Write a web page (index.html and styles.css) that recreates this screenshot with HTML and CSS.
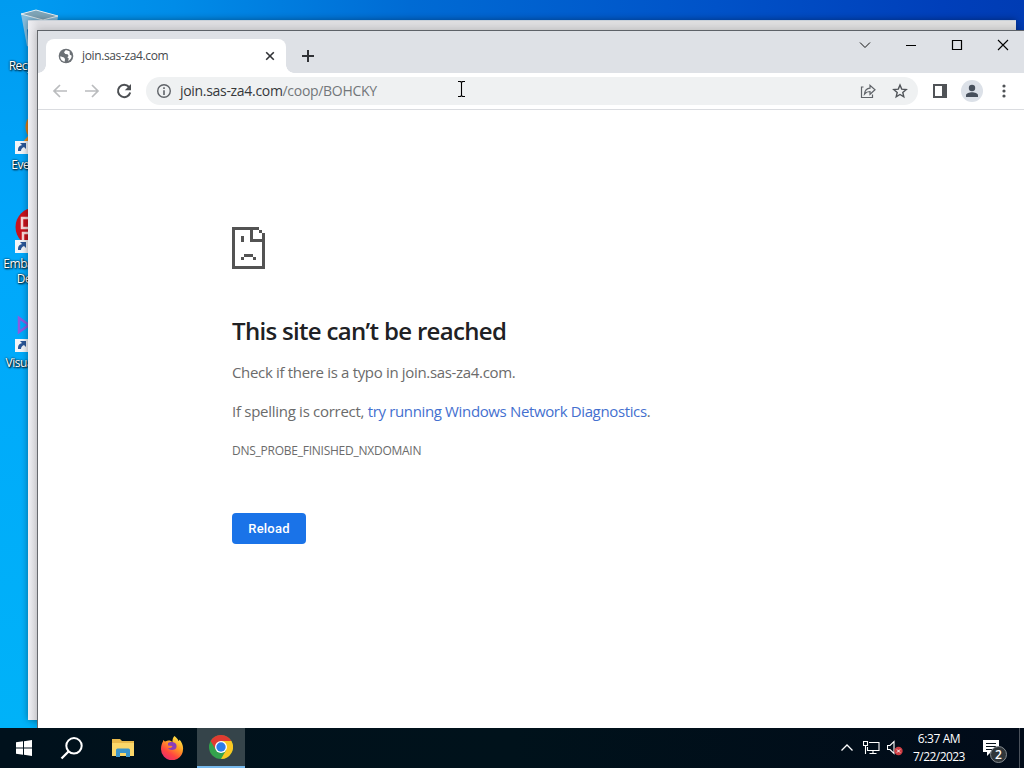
FILE: index.html
```
<!DOCTYPE html>
<html lang="en">
<head>
  <meta charset="UTF-8">
  <meta name="viewport" content="width=device-width, initial-scale=1.0">
  <title>join.sas-za4.com</title>
  <link rel="stylesheet" href="styles.css">
</head>
<body>
  <div class="desktop">
    <!-- Desktop icons -->
    <div class="shortcut recycle">
      <svg width="40" height="44" viewBox="0 0 40 44">
        <path d="M1 5 16 1l22 6-4 30-14 6-13-6z" fill="#a9c9dc" opacity=".8"/>
        <path d="M1 5 16 1l22 6-15 4z" fill="#7fa5b8" stroke="#e2edf2"/>
        <path d="M7 20l5 4-4 9z" fill="#1b78bd"/>
      </svg>
      <span>Recycle Bin</span>
    </div>
    <div class="shortcut everything">
      <svg width="40" height="44" viewBox="0 0 40 44">
        <circle cx="26" cy="15" r="13" fill="none" stroke="#d97c13" stroke-width="5"/>
        <path d="M17 24 7 36" stroke="#e88b1b" stroke-width="6"/>
        <path d="M0 29h13v13H0z" fill="#f3f5f8"/>
        <path d="M3 39c0-4 1-5 4-6l-2-2h6v6l-2-2c-2 1-3 2-3 4z" fill="#2b5797"/>
      </svg>
      <span>Everything</span>
    </div>
    <div class="shortcut embarcadero">
      <svg width="40" height="44" viewBox="0 0 40 44">
        <circle cx="20" cy="18" r="19.5" fill="#c8131d"/>
        <path d="M14 9H7v10h7M14 24H8v7" fill="none" stroke="#f7d8d8" stroke-width="2.5"/>
        <path d="M0 31h13v13H0z" fill="#f3f5f8"/>
        <path d="M3 41c0-4 1-5 4-6l-2-2h6v6l-2-2c-2 1-3 2-3 4z" fill="#2b5797"/>
      </svg>
      <span>Embarcadero<br>Dev-C++</span>
    </div>
    <div class="shortcut visual">
      <svg width="40" height="44" viewBox="0 0 40 44">
        <path d="M4 10v14l10-7z" fill="none" stroke="#8a5be0" stroke-width="2.5"/>
        <path d="M0 31h13v13H0z" fill="#f3f5f8"/>
        <path d="M3 41c0-4 1-5 4-6l-2-2h6v6l-2-2c-2 1-3 2-3 4z" fill="#2b5797"/>
      </svg>
      <span>Visual Studio</span>
    </div>

    <div class="back-window"></div>

    <!-- Browser window -->
    <div class="browser">
      <div class="titlebar">
        <div class="tab">
          <svg width="16" height="16" viewBox="0 0 16 16">
            <circle cx="8" cy="8" r="7.3" fill="#6b7075"/>
            <path d="M2.3 8.2 6 9.5l1 1.4-.3 2.8C4 13.3 2 11 2.3 8.2z" fill="#fff"/>
            <path d="M7.5 2.2 6 4.2 7.3 6l2.3.3 1 1.8-1.3 1.1 1.5 1.4-.6 2.3c2-1 3.5-3 3.5-5.2l-2-1.2V3.6C10.5 2.7 9 2.1 7.5 2.2z" fill="#fff"/>
          </svg>
          <span class="tab-title">join.sas-za4.com</span>
          <svg class="tab-close" width="16" height="16" viewBox="0 0 16 16">
            <path d="M4.2 4.2l7.6 7.6M11.8 4.2l-7.6 7.6" stroke="#303236" stroke-width="1.6"/>
          </svg>
        </div>
        <svg class="new-tab" width="16" height="16" viewBox="0 0 16 16">
          <path d="M8 2v12M2 8h12" stroke="#303236" stroke-width="2"/>
        </svg>
        <div class="controls">
          <svg width="46" height="28" viewBox="0 0 46 28"><path d="M18 11.5l5 5 5-5" fill="none" stroke="#111"/></svg>
          <svg width="46" height="28" viewBox="0 0 46 28"><path d="M18 14.5h10" stroke="#000"/></svg>
          <svg width="46" height="28" viewBox="0 0 46 28"><path d="M18.5 9.5h9v9h-9z" fill="none" stroke="#000" stroke-width="1.2"/></svg>
          <svg width="46" height="28" viewBox="0 0 46 28"><path d="M18 9l10 10M28 9l-10 10" stroke="#000" stroke-width="1.1"/></svg>
        </div>
      </div>

      <div class="toolbar">
        <div class="nav">
          <svg width="16" height="16" viewBox="0 0 16 16"><path d="M15 8H2M8 2 2 8l6 6" fill="none" stroke="#babcbe" stroke-width="1.7"/></svg>
          <svg width="16" height="16" viewBox="0 0 16 16"><path d="M1 8h13M8 2l6 6-6 6" fill="none" stroke="#babcbe" stroke-width="1.7"/></svg>
          <svg width="16" height="16" viewBox="0 0 16 16">
            <path d="M13 4A6.2 6.2 0 1 0 14.2 9.5" fill="none" stroke="#4c4f53" stroke-width="2"/>
            <path d="M15 1v6.2H8.8z" fill="#4c4f53"/>
          </svg>
        </div>
        <div class="omnibox">
          <svg width="16" height="16" viewBox="0 0 16 16">
            <circle cx="8" cy="8" r="6.3" fill="none" stroke="#5f6368" stroke-width="1.4"/>
            <path d="M8 7.2V12M8 4.2v1.7" stroke="#5f6368" stroke-width="1.6"/>
          </svg>
          <span class="url">join.sas-za4.com<em>/coop/BOHCKY</em></span>
          <svg class="share" width="16" height="16" viewBox="0 0 16 16">
            <path d="M3.5 4h-2v10.5h11v-3" fill="none" stroke="#5f6368" stroke-width="1.2"/>
            <path d="M4.5 11c.4-3.7 2.3-5.7 5.5-5.9V2.300L15 6.800l-5 4.500V8.500C7.500 8.500 6 9.200 4.500 11z" fill="none" stroke="#5f6368" stroke-width="1.2"/>
          </svg>
          <svg width="16" height="16" viewBox="0 0 16 16">
            <path d="M8 2l1.7 4.1 4.500.4-3.400 2.900 1 4.400L8 11.500l-3.800 2.300 1-4.400-3.400-2.900 4.500-.4z" fill="none" stroke="#4f5358" stroke-width="1.4"/>
          </svg>
        </div>
        <svg class="panel" width="16" height="16" viewBox="0 0 16 16">
          <path d="M2 2h12v12H2z" fill="#fff" stroke="#505357" stroke-width="2"/>
          <path d="M10 1h5v14h-5z" fill="#505357"/>
        </svg>
        <div class="avatar">
          <svg width="16" height="16" viewBox="0 0 16 16"><circle cx="8" cy="5" r="3.2" fill="#47505c"/><path d="M2 14v-1.8c0-2 3.500-3 6-3s6 1 6 3V14z" fill="#47505c"/></svg>
        </div>
        <svg class="menu" width="16" height="16" viewBox="0 0 16 16" fill="#505357">
          <circle cx="8" cy="3" r="1.6"/><circle cx="8" cy="8" r="1.6"/><circle cx="8" cy="13" r="1.6"/>
        </svg>
      </div>

      <!-- Error page -->
      <div class="page">
        <svg class="sad-page" width="33" height="42" viewBox="0 0 11 14" shape-rendering="crispEdges">
          <path d="M0 0h9v1H7v3h4v1H6V1H1v12h9V5h1v9H0zM9 1h1v1H9zM10 2h1v3h-1zM3 3h1v2H3zM4 9h3v1H4zM3 10h1v1H3zM7 10h1v1H7z" fill="#535353"/>
        </svg>
        <h1>This site can’t be reached</h1>
        <p class="check">Check if there is a typo in join.sas-za4.com.</p>
        <p class="diag">If spelling is correct, <a>try running Windows Network Diagnostics</a>.</p>
        <p class="code">DNS_PROBE_FINISHED_NXDOMAIN</p>
        <button class="reload">Reload</button>
      </div>
    </div>

    <!-- Mouse cursor -->
    <svg class="cursor" width="9" height="17" viewBox="0 0 9 17">
      <path d="M1 .5h2.500l1 1 1-1H8M4.500 1.500v14M1 15.500h2.500l1-1 1 1H8" fill="none" stroke="#000" stroke-width="1.1"/>
    </svg>

    <!-- Taskbar -->
    <div class="taskbar">
      <div class="task">
        <svg width="16" height="16" viewBox="0 0 16 16"><path d="M0 2.300 7 1.300V7.500H0zM8 1.200 16 0v7.500H8zM0 8.500h7v6.200l-7-1zM8 8.500h8V16l-8-1.200z" fill="#fff"/></svg>
      </div>
      <div class="task search">
        <svg width="24" height="24" viewBox="0 0 24 24"><circle cx="14" cy="9.800" r="7.700" fill="none" stroke="#fff" stroke-width="2"/><path d="M8.500 15.500 1.500 22.500" stroke="#fff" stroke-width="2.300"/></svg>
      </div>
      <div class="task">
        <svg width="22" height="18" viewBox="0 0 22 18">
          <path d="M0 0h8l2 2h12v15H0z" fill="#e9b94b"/>
          <path d="M0 4h22v13H0z" fill="#fbd769"/>
          <path d="M4 18V11q0-1.500 1.500-1.500h11q1.500 0 1.500 1.500v7h-4v-4H8v4z" fill="#3b94ca"/>
        </svg>
      </div>
      <div class="task">
        <svg width="24" height="24" viewBox="0 0 24 24">
          <defs>
            <linearGradient id="fox" x1=".8" y1="0" x2=".2" y2="1">
              <stop offset="0" stop-color="#fff04a"/><stop offset=".4" stop-color="#ff9a25"/><stop offset=".7" stop-color="#ff4540"/><stop offset="1" stop-color="#e52a73"/>
            </linearGradient>
          </defs>
          <path d="M14.500 0c2.500 2 3.500 3.500 4 5 .8-.3 1-1 1-1.500 2.500 3 4 6.500 3.500 10A11 11 0 0 1 1 13c0-3 .8-5.500 2-7.500V4l2 1.500L8 4.500c2-.2 3.500.5 4.500 1.500-.2-2.500.5-4.500 2-6z" fill="url(#fox)"/>
          <path d="M8 7c2-1.500 6-1.500 8 1 1.500 3 0 6-4 6-2 0-3-1-4-2 3 .5 4-.8 4.500-2L8 9.500z" fill="#8b3dba"/>
        </svg>
      </div>
      <div class="task active">
        <svg width="24" height="24" viewBox="0 0 24 24">
          <circle cx="12" cy="12" r="12" fill="#34a34d"/>
          <path d="M12 12 1.600 6A12 12 0 0 1 22.400 6z" fill="#e03b31"/>
          <path d="M12 6h10.400A12 12 0 0 1 12 24l5.200-9z" fill="#fbc722"/>
          <path d="M1.600 6 7 15l5-9z" fill="#e03b31"/>
          <circle cx="12" cy="12" r="6" fill="#fff"/>
          <circle cx="12" cy="12" r="4.700" fill="#2c7ce9"/>
        </svg>
      </div>
      <div class="tray">
        <svg width="12" height="16" viewBox="0 0 12 16"><path d="M.5 10.500 6 5l5.500 5.500" fill="none" stroke="#fff" stroke-width="1.3"/></svg>
        <svg class="network" width="17" height="16" viewBox="0 0 17 16">
          <path d="M6 2.500h10v8H4.500V7M10 10.500v3M6.500 13.500h7M.5 1.500h4v4h-4zM2.500 5.500V14" fill="none" stroke="#fff" stroke-width="1.1"/>
        </svg>
        <svg class="volume" width="16" height="16" viewBox="0 0 16 16">
          <path d="M.5 5.500h2.500L7 1.500v12L3 9.500H.5z" fill="none" stroke="#fff" stroke-width="1.1"/>
          <circle cx="11.500" cy="11" r="4.200" fill="#cf3e44"/>
          <path d="M10 9.500l3 3M13 9.500l-3 3" stroke="#fff"/>
        </svg>
        <div class="clock"><span class="time">6:37 AM</span><span class="date">7/22/2023</span></div>
        <div class="notify">
          <svg width="17" height="16" viewBox="0 0 17 16">
            <path d="M0 0h16v12H8l-4 4v-4H0z" fill="#fff"/>
            <path d="M3 3.500h10M3 6.500h10M3 9.500h7" stroke="#07121b"/>
          </svg>
          <span class="badge">2</span>
        </div>
      </div>
    </div>
  </div>
</body>
</html>
```
FILE: styles.css
```
* {
  box-sizing: border-box;
}
body {
  margin: 0;
  font-family: "Open Sans", "Noto Sans", sans-serif;
}
svg {
  display: block;
  flex: none;
}
.desktop {
  position: relative;
  width: 1024px;
  height: 768px;
  overflow: hidden;
  background: linear-gradient(90deg, #009df3 0%, #008ce8 17%, #006bd4 40%, #0052c8 70%, #003fba 92%, #003cb4 100%);
}
.desktop::before {
  content: "";
  position: absolute;
  top: 0;
  left: 0;
  width: 38px;
  height: 728px;
  background: linear-gradient(#009bf0, #00a8fb 35%, #00b2f8);
}

/* Desktop icons */
.shortcut {
  position: absolute;
  width: 76px;
  left: -3px;
  display: flex;
  flex-direction: column;
  align-items: center;
  color: white;
  font-size: 12px;
  line-height: 15px;
  letter-spacing: -0.45px;
  text-align: center;
  white-space: nowrap;
  text-shadow: 1px 1px 2px #000, 0 0 2px #000;
}
.shortcut span {
  margin: 3px 0 0 7px;
}
.recycle { top: 9px; left: 2px; }
.recycle span { margin: 5px 5px 0 0; }
.everything { top: 112px; }
.everything span { margin-top: 1px; }
.embarcadero { top: 209px; }
.visual { top: 308px; }

/* Windows */
.back-window {
  position: absolute;
  left: 28px;
  top: 20px;
  width: 988px;
  height: 700px;
  background: linear-gradient(90deg, #eeeef2, #dedee2 10px, #dedede);
  border-top: 1px solid #c9d1d9;
  box-shadow: 0 0 7px rgba(0, 0, 0, 0.4);
}
.browser {
  position: absolute;
  left: 37px;
  top: 30px;
  width: 987px;
  height: 698px;
  background: white;
  border-top: 1px solid #5d6268;
  border-left: 1px solid #66696d;
  box-shadow: 0 0 8px rgba(0, 0, 0, 0.2);
}
.titlebar {
  display: flex;
  height: 42px;
  padding-left: 8px;
  background: #dee1e6;
}
.tab {
  position: relative;
  display: flex;
  align-items: center;
  width: 240px;
  height: 34px;
  margin-top: 8px;
  padding: 0 8px 0 12px;
  background: white;
  border-radius: 8px 8px 0 0;
}
.tab::before, .tab::after {
  content: "";
  position: absolute;
  bottom: 0;
  width: 8px;
  height: 8px;
}
.tab::before {
  left: -8px;
  background: radial-gradient(circle at 0 0, transparent 7.5px, white 8px);
}
.tab::after {
  right: -8px;
  background: radial-gradient(circle at 100% 0, transparent 7.5px, white 8px);
}
.tab-title {
  margin: -1px 0 0 8px;
  font-size: 12px;
  letter-spacing: -0.37px;
  color: #45494d;
}
.tab-close {
  margin-left: auto;
}
.new-tab {
  margin: 17px 0 0 14px;
}
.controls {
  display: flex;
  margin-left: auto;
  margin-right: -2px;
}
.toolbar {
  display: flex;
  align-items: center;
  height: 37px;
  padding: 0 10px 0 14px;
  border-bottom: 1px solid #dadce0;
}
.nav {
  display: flex;
  gap: 16px;
}
.omnibox {
  display: flex;
  align-items: center;
  width: 772px;
  height: 28px;
  margin-left: 14px;
  padding: 0 10px;
  border-radius: 14px;
  background: #eff1f2;
}
.url {
  margin: -1px 0 0 8px;
  font-size: 14px;
  letter-spacing: -0.31px;
  color: #36383b;
}
.url em {
  font-style: normal;
  color: #73777a;
}
.share {
  margin-left: auto;
  margin-right: 16px;
}
.panel {
  margin-left: 14px;
}
.avatar {
  display: flex;
  align-items: center;
  justify-content: center;
  width: 22px;
  height: 22px;
  margin-left: 13px;
  border-radius: 50%;
  background: #dce1e8;
}
.menu {
  margin-left: 13px;
}

/* Error page */
.page {
  padding: 117px 0 0 194px;
  color: #6b6b6b;
}
h1 {
  margin: 46px 0 0;
  font-size: 24px;
  font-weight: 600;
  line-height: 32px;
  letter-spacing: -0.68px;
  color: #202124;
}
p {
  margin: 0;
  font-size: 15px;
  line-height: 24px;
}
.check {
  margin-top: 13px;
  letter-spacing: -0.33px;
}
.diag {
  margin-top: 15px;
  letter-spacing: -0.28px;
}
.diag a {
  letter-spacing: -0.36px;
  color: #4470cf;
}
.code {
  margin-top: 16px;
  font-size: 12px;
  letter-spacing: -0.25px;
}
.reload {
  display: block;
  width: 74px;
  height: 31px;
  margin-top: 50px;
  padding: 0;
  border: none;
  border-radius: 4px;
  background: #1a73e8;
  color: white;
  font: 500 13px Roboto, sans-serif;
  letter-spacing: 0.2px;
}
.cursor {
  position: absolute;
  left: 457px;
  top: 81px;
}

/* Taskbar */
.taskbar {
  position: absolute;
  left: 0;
  top: 728px;
  width: 1024px;
  height: 40px;
  display: flex;
  background: linear-gradient(90deg, #00111c, #00121b 50%, #010b19);
  color: white;
}
.task {
  display: flex;
  align-items: center;
  justify-content: center;
  width: 48px;
  margin-right: 1px;
}
.search {
  margin-right: 2px;
  padding-right: 3px;
}
.active {
  background: #35444a;
  border-bottom: 2px solid #76b9ed;
}
.tray {
  display: flex;
  align-items: center;
  margin-left: auto;
  margin-right: 4px;
  padding-right: 19px;
  border-right: 1px solid #4a515b;
}
.network {
  margin-left: 10px;
}
.volume {
  margin-left: 7px;
}
.clock {
  width: 72px;
  font-size: 12px;
  line-height: 18px;
  text-align: center;
}
.clock span {
  display: block;
}
.time { letter-spacing: -0.4px; }
.date { letter-spacing: -0.55px; }
.notify {
  position: relative;
  margin-left: 8px;
}
.badge {
  position: absolute;
  left: 7px;
  top: 6px;
  width: 17px;
  height: 17px;
  border: 1px solid #858b90;
  border-radius: 50%;
  background: #30363a;
  font-size: 12px;
  font-weight: 600;
  line-height: 15px;
  text-align: center;
}
```
